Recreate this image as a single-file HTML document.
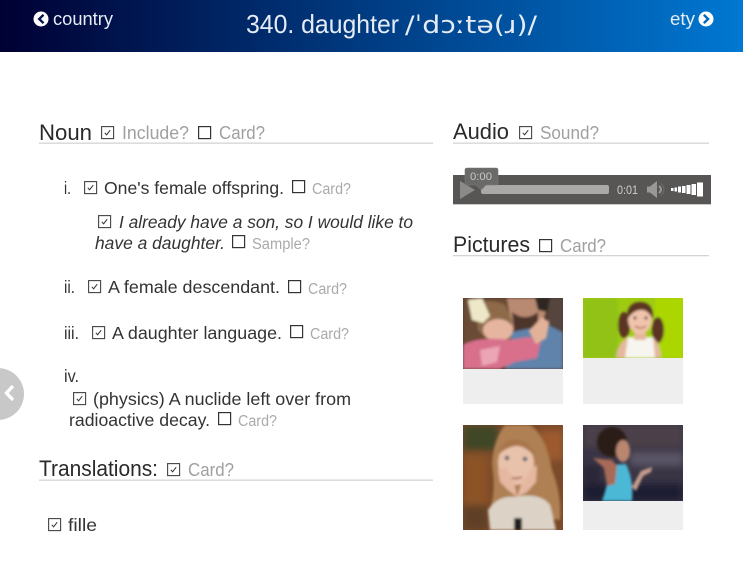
<!DOCTYPE html>
<html><head><meta charset="utf-8"><title>daughter</title>
<style>
html,body{margin:0;padding:0;background:#fff;width:743px;height:564px;overflow:hidden}
svg{display:block}
text{font-family:"Liberation Sans","DejaVu Sans",sans-serif;fill:#333;font-size:17.5px}
.h{font-size:22px;fill:#2a2a2a}
.g{fill:#a0a0a0;font-size:18px}
.s{fill:#aaa;font-size:15.5px}
.w{fill:#e6ecf6}
</style></head><body>
<svg width="743" height="564" viewBox="0 0 743 564" xmlns="http://www.w3.org/2000/svg">
<defs>
<linearGradient id="hd" x1="0" y1="0" x2="1" y2="0"><stop offset="0" stop-color="#000033"/><stop offset="1" stop-color="#0078d2"/></linearGradient>
<filter id="b1" x="-20%" y="-20%" width="140%" height="140%"><feGaussianBlur stdDeviation="1.2"/></filter>
<filter id="b2" x="-30%" y="-30%" width="160%" height="160%"><feGaussianBlur stdDeviation="3.5"/></filter>
<clipPath id="c1"><rect x="463" y="298" width="100" height="71"/></clipPath>
<clipPath id="c2"><rect x="583" y="298" width="100" height="60"/></clipPath>
<clipPath id="c3"><rect x="463" y="425" width="100" height="105"/></clipPath>
<clipPath id="c4"><rect x="583" y="425" width="100" height="76"/></clipPath>
<g id="u"><rect x="0.6" y="0.6" width="12" height="12" fill="#fff" stroke="#333" stroke-width="1.2"/></g>
<g id="k"><rect x="0.6" y="0.6" width="12" height="12" fill="#fff" stroke="#444" stroke-width="1.1"/><path d="M3.8 6.8L5.6 8.8L9.2 4.2" fill="none" stroke="#333" stroke-width="1"/></g>
</defs>

<!-- header -->
<rect x="0" y="0" width="743" height="52" fill="url(#hd)"/>
<circle cx="41" cy="19" r="7.5" fill="#fff"/>
<path d="M43.5 14.8L39.2 19L43.5 23.2" fill="none" stroke="#03134f" stroke-width="2.4"/>
<text x="53" y="25" class="w" style="font-size:18.500px" textLength="60" lengthAdjust="spacingAndGlyphs">country</text>
<text x="246" y="33" class="w" style="font-size:26px" textLength="153" lengthAdjust="spacingAndGlyphs">340. daughter</text>
<text x="405" y="33" class="w" style="font-family:'DejaVu Sans',sans-serif;font-size:24px" textLength="132" lengthAdjust="spacingAndGlyphs">/ˈdɔːtə(ɹ)/</text>
<text x="670" y="25" class="w" style="font-size:18.500px" textLength="25" lengthAdjust="spacingAndGlyphs">ety</text>
<circle cx="706" cy="19" r="7.5" fill="#fff"/>
<path d="M703.8 14.8L708.1 19L703.8 23.2" fill="none" stroke="#0068ba" stroke-width="2.4"/>

<!-- side button -->
<circle cx="-2" cy="394" r="26" fill="#c8c8c8"/>
<path d="M13 386L6.500 393L13 400" fill="none" stroke="#fff" stroke-width="3.4"/>

<!-- Noun -->
<text x="39" y="140" class="h" textLength="53" lengthAdjust="spacingAndGlyphs">Noun</text>
<use href="#k" x="101" y="126"/>
<text x="122" y="139" class="g" textLength="67" lengthAdjust="spacingAndGlyphs">Include?</text>
<use href="#u" x="198" y="126"/>
<text x="219" y="139" class="g" textLength="46" lengthAdjust="spacingAndGlyphs">Card?</text>
<rect x="39" y="142.500" width="394" height="1.300" fill="#d4d4d4"/>

<text x="64" y="194" textLength="7" lengthAdjust="spacingAndGlyphs">i.</text>
<use href="#k" x="84" y="181"/>
<text x="104" y="194" textLength="180" lengthAdjust="spacingAndGlyphs">One's female offspring.</text>
<use href="#u" x="292" y="180"/>
<text x="312" y="194" class="s" textLength="39" lengthAdjust="spacingAndGlyphs">Card?</text>

<use href="#k" x="98" y="215"/>
<text x="119" y="228" font-style="italic" textLength="294" lengthAdjust="spacingAndGlyphs">I already have a son, so I would like to</text>
<text x="95" y="249" font-style="italic" textLength="130" lengthAdjust="spacingAndGlyphs">have a daughter.</text>
<use href="#u" x="232" y="235"/>
<text x="252" y="249" class="s" textLength="58" lengthAdjust="spacingAndGlyphs">Sample?</text>

<text x="64" y="293" textLength="11" lengthAdjust="spacingAndGlyphs">ii.</text>
<use href="#k" x="88" y="280"/>
<text x="108" y="293" textLength="172" lengthAdjust="spacingAndGlyphs">A female descendant.</text>
<use href="#u" x="288" y="280"/>
<text x="308" y="294" class="s" textLength="39" lengthAdjust="spacingAndGlyphs">Card?</text>

<text x="64" y="339" textLength="15" lengthAdjust="spacingAndGlyphs">iii.</text>
<use href="#k" x="92" y="326"/>
<text x="112" y="339" textLength="170" lengthAdjust="spacingAndGlyphs">A daughter language.</text>
<use href="#u" x="290" y="325"/>
<text x="310" y="339" class="s" textLength="39" lengthAdjust="spacingAndGlyphs">Card?</text>

<text x="64" y="382" textLength="15" lengthAdjust="spacingAndGlyphs">iv.</text>
<use href="#k" x="73" y="392"/>
<text x="93" y="405" textLength="258" lengthAdjust="spacingAndGlyphs">(physics) A nuclide left over from</text>
<text x="69" y="426" textLength="141" lengthAdjust="spacingAndGlyphs">radioactive decay.</text>
<use href="#u" x="218" y="412"/>
<text x="238" y="426" class="s" textLength="39" lengthAdjust="spacingAndGlyphs">Card?</text>

<!-- Translations -->
<text x="39" y="476" class="h" textLength="119" lengthAdjust="spacingAndGlyphs">Translations:</text>
<use href="#k" x="167" y="463"/>
<text x="188" y="476" class="g" textLength="46" lengthAdjust="spacingAndGlyphs">Card?</text>
<rect x="39" y="479.500" width="394" height="1.300" fill="#d4d4d4"/>
<use href="#k" x="48" y="518"/>
<text x="68" y="531" textLength="29" lengthAdjust="spacingAndGlyphs">fille</text>

<!-- Audio -->
<text x="453" y="139" class="h" textLength="56" lengthAdjust="spacingAndGlyphs">Audio</text>
<use href="#k" x="519" y="126"/>
<text x="540" y="139" class="g" textLength="59" lengthAdjust="spacingAndGlyphs">Sound?</text>
<rect x="453" y="142.500" width="256" height="1.300" fill="#d4d4d4"/>

<rect x="453" y="175" width="258" height="29" fill="#575654"/>
<rect x="453" y="204" width="258" height="1" fill="#c8c8c8"/>
<path d="M460 181L475 190L460 199Z" fill="#8b8a88"/>
<rect x="481" y="185" width="128" height="9" rx="2" fill="#aaa9a8"/>
<path d="M467 168H496Q498 168 498 170V183Q498 185 496 185H486L481 190L476 185H467Q465 185 465 183V170Q465 168 467 168Z" fill="#6a6a68" stroke="#777" stroke-width="0.6"/>
<text x="470" y="180" style="font-size:11px;fill:#c8c8c8" textLength="22" lengthAdjust="spacingAndGlyphs">0:00</text>
<text x="617" y="194" style="font-size:11.500px;fill:#d0d0d0" textLength="21" lengthAdjust="spacingAndGlyphs">0:01</text>
<path d="M647 186.500H650L657 181V198L650 192.500H647Z" fill="#989896"/>
<path d="M659 186Q663 189.500 659 193" fill="none" stroke="#989896" stroke-width="2"/>
<path d="M661 183.500Q667 189.500 661 195.500" fill="none" stroke="#6e6e6c" stroke-width="1"/>
<g fill="#fff">
<rect x="671" y="188" width="2.500" height="3"/><rect x="674.500" y="187.500" width="2.500" height="4"/><rect x="678" y="186.500" width="3" height="6"/><rect x="682" y="186" width="3.500" height="7"/><rect x="686.500" y="185" width="4" height="9"/><rect x="691.500" y="184" width="4.500" height="11"/><rect x="697" y="182.500" width="6" height="14"/>
</g>

<!-- Pictures -->
<text x="453" y="252" class="h" textLength="77" lengthAdjust="spacingAndGlyphs">Pictures</text>
<use href="#u" x="539" y="239"/>
<text x="560" y="252" class="g" textLength="46" lengthAdjust="spacingAndGlyphs">Card?</text>
<rect x="453" y="255" width="256" height="1.300" fill="#d4d4d4"/>

<!-- cards -->
<rect x="463" y="298" width="100" height="106" fill="#eeeeee"/>
<rect x="583" y="298" width="100" height="106" fill="#eeeeee"/>
<rect x="583" y="425" width="100" height="105" fill="#eeeeee"/>

<!-- photo 1 -->
<g clip-path="url(#c1)">
<rect x="463" y="298" width="100" height="71" fill="#4e382c"/>
<g filter="url(#b1)">
<path d="M463 298H510V345H463Z" fill="#6a4c35"/>
<path d="M548 298H563V330L548 325Z" fill="#54453c"/>
<path d="M507 298H550L546 312L540 330L512 330Z" fill="#b98a72"/>
<path d="M535 298H550L547 312L538 310Z" fill="#2e2622"/>
<path d="M512 312Q525 322 538 312L538 330L525 335L514 331Z" fill="#4d362a"/>
<path d="M512 332L548 325L563 332V369H505Z" fill="#5f83ab"/>
<path d="M475 304Q490 298 505 305L512 320L511 340L490 342L478 330Z" fill="#8e6a48"/>
<ellipse cx="498" cy="330" rx="15" ry="11" fill="#e6b5a0"/>
<path d="M463 345Q480 336 510 340L528 337L541 340L537 358L515 362L500 369H463Z" fill="#d8708c"/>
<path d="M480 350L500 346L497 362L482 366Z" fill="#eba5b5"/>
<path d="M529 331L542 317L549 322L546 338L536 344Z" fill="#e2b298"/>
<path d="M468 300L482 298L490 316L483 323L472 320Z" fill="#efe8c8"/>
</g>
</g>

<!-- photo 2 -->
<g clip-path="url(#c2)">
<rect x="583" y="298" width="100" height="60" fill="#9ecb12"/>
<g filter="url(#b1)">
<rect x="583" y="298" width="35" height="60" fill="#93c218"/>
<rect x="655" y="298" width="28" height="60" fill="#abd604"/>
<ellipse cx="624" cy="325" rx="6" ry="13" fill="#5b3420"/>
<ellipse cx="658" cy="330" rx="6" ry="13" fill="#5b3420"/>
<path d="M616 358Q618 342 628 337H652Q660 342 661 358Z" fill="#e5b79c"/>
<path d="M625 358L628 337H653L655 358Z" fill="#f7f5f0"/>
<rect x="634" y="330" width="12" height="10" fill="#e5b79c"/>
<ellipse cx="640" cy="319" rx="12" ry="15" fill="#f0c4ac"/>
<path d="M627 320Q626 302 640 302Q654 302 653 320Q648 309 640 310Q632 311 627 320Z" fill="#5c3622"/>
<circle cx="635" cy="318" r="1.500" fill="#3a2a22"/><circle cx="646" cy="318" r="1.500" fill="#3a2a22"/>
<path d="M635 326Q640 330 646 326" stroke="#b9655a" stroke-width="1.500" fill="none"/>
</g>
</g>

<!-- photo 3 -->
<g clip-path="url(#c3)">
<rect x="463" y="425" width="100" height="105" fill="#7b4a28"/>
<g filter="url(#b2)">
<rect x="463" y="425" width="35" height="25" fill="#3f4728"/>
<rect x="463" y="455" width="25" height="75" fill="#8c5228"/>
<rect x="540" y="430" width="23" height="30" fill="#9c5a2e"/>
<rect x="463" y="505" width="25" height="25" fill="#5e4028"/>
</g>
<g filter="url(#b1)">
<path d="M505 425H530Q546 435 552 470Q562 495 560 520L490 510Q496 490 492 465Q493 440 505 425Z" fill="#ae8052"/>
<path d="M488 510Q498 495 515 497Q540 492 550 505L556 530H490Z" fill="#dcd3c6"/>
<rect x="514" y="518" width="8" height="12" fill="#1e1a1c"/>
<ellipse cx="516" cy="463" rx="18" ry="22" fill="#e8c2aa"/>
<path d="M498 455Q503 436 520 440Q532 443 536 458Q525 445 515 446Q505 448 498 455Z" fill="#a9764c"/>
<circle cx="507" cy="458" r="2.300" fill="#5a6672"/><circle cx="525" cy="459" r="2.300" fill="#5a6672"/>
<path d="M509 477Q515 480 522 477" stroke="#b06c60" stroke-width="2" fill="none"/>
<path d="M498 470L506 467L514 482L517 497L508 490L500 482Z" fill="#e6b8a0"/>
<path d="M537 465L536 482L527 492L517 497L522 482L530 470Z" fill="#e6b8a0"/>
</g>
</g>

<!-- photo 4 -->
<g clip-path="url(#c4)">
<rect x="583" y="425" width="100" height="76" fill="#3a3545"/>
<g filter="url(#b2)">
<rect x="583" y="425" width="100" height="22" fill="#4c4148"/>
<rect x="583" y="484" width="100" height="17" fill="#1f1d33"/>
<rect x="630" y="452" width="53" height="14" fill="#5a5566"/>
<rect x="583" y="465" width="18" height="20" fill="#2a2838"/>
</g>
<g filter="url(#b1)">
<ellipse cx="612" cy="442" rx="15" ry="15" fill="#2b1b18"/>
<ellipse cx="623" cy="451" rx="7" ry="11" fill="#b98670"/>
<path d="M610 465L626 464Q634 480 632 501H602Q608 485 610 465Z" fill="#4cb8d6"/>
<path d="M593 458L612 460L617 466L615 484L607 486L604 468Z" fill="#a86a56"/>
<path d="M632 487L641 471L652 467L651 472L643 476L636 491Z" fill="#c89e8e"/>
</g>
</g>
</svg>
</body></html>
